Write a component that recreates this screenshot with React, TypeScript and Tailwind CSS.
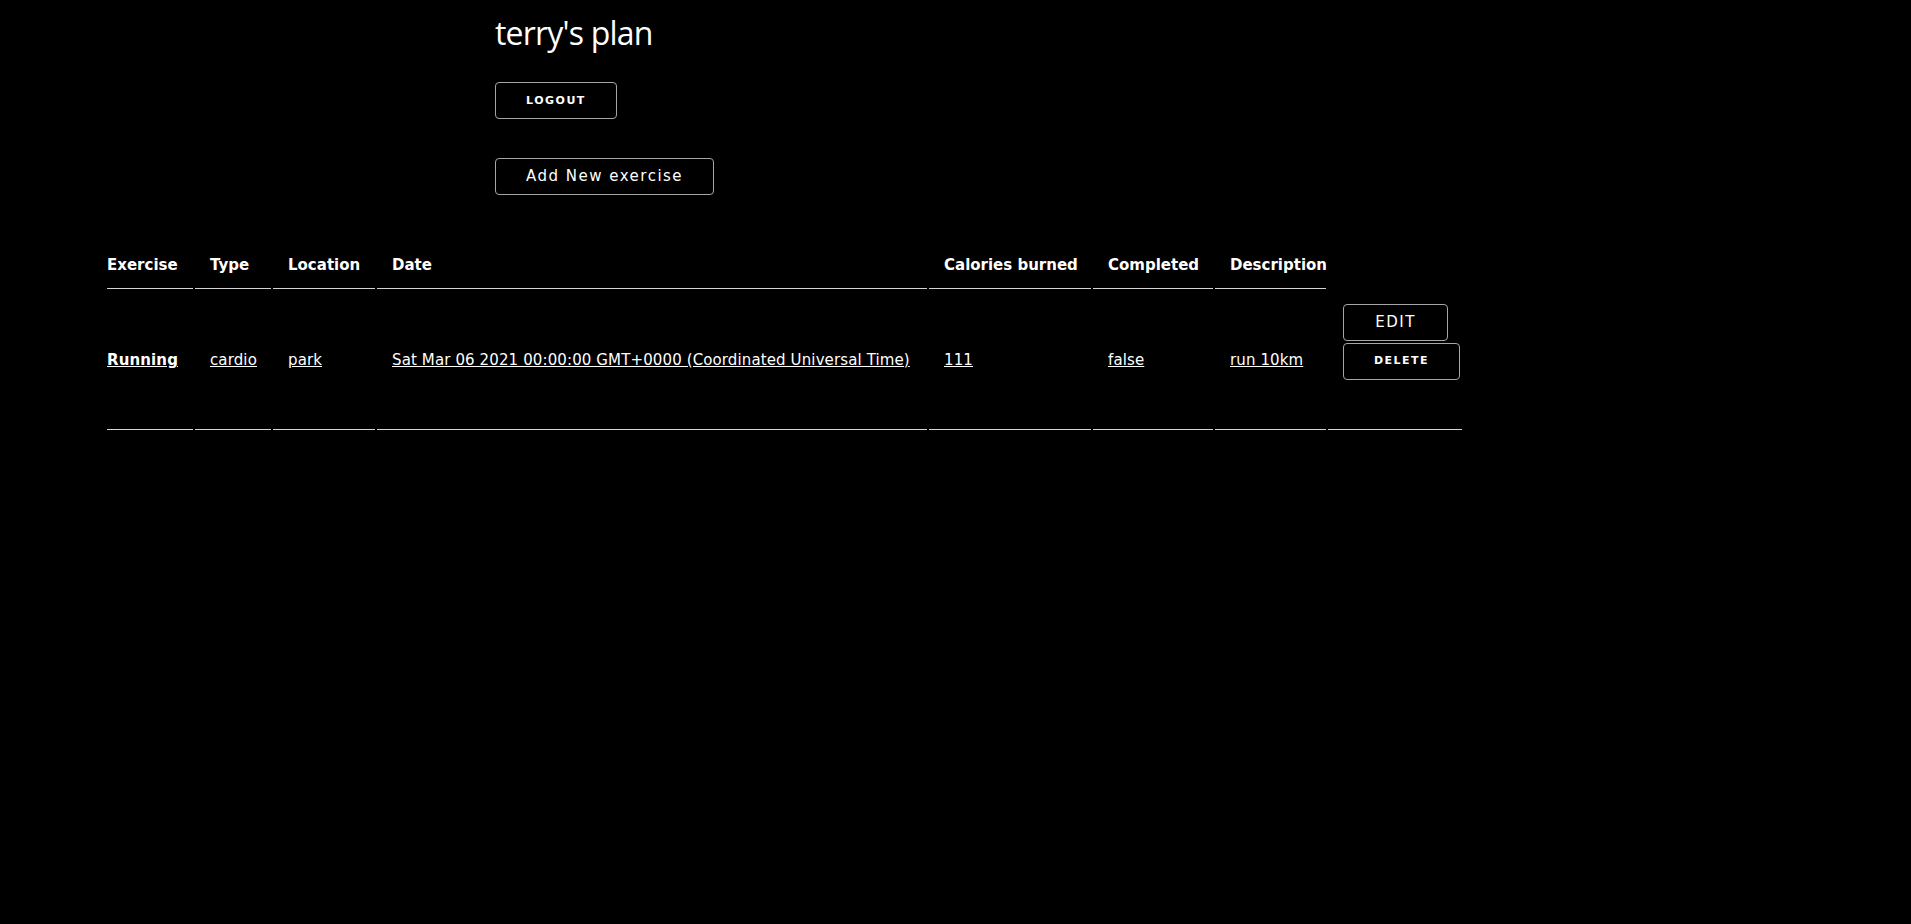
import React from 'react'

const rows = [
  {
    exercise: 'Running',
    type: 'cardio',
    location: 'park',
    date: 'Sat Mar 06 2021 00:00:00 GMT+0000 (Coordinated Universal Time)',
    calories: '111',
    completed: 'false',
    description: 'run 10km',
  },
]

export default function App() {
  const th = 'px-[15px] pt-[16px] pb-[14px] text-left font-bold leading-[18px] whitespace-nowrap border-b border-[#d4d4d4] align-middle'
  const td = 'px-[15px] py-[15px] leading-[18px] whitespace-nowrap tracking-[0.12px] border-b border-[#d4d4d4] align-middle'

  return (
    <div className="min-h-screen bg-black text-white text-[15px]" style={{ fontFamily: '"DejaVu Sans", Verdana, sans-serif' }}>
      <div className="pl-[495px] pt-[14px]">
        <h1 className="text-[32px] leading-[38px] tracking-[-0.8px] text-white" style={{ fontFamily: '"Open Sans", "Noto Sans", sans-serif' }}>
          terry's plan
        </h1>
        <button className="mt-[30px] w-[122px] h-[37px] pt-[2px] border border-[#a6a6a6] rounded-[4px] text-[11px] font-bold tracking-[1.5px] text-white">
          LOGOUT
        </button>
        <div>
          <button className="mt-[39px] w-[219px] h-[37px] border border-[#a6a6a6] rounded-[4px] text-[15px] tracking-[1.5px] text-white">
            Add New exercise
          </button>
        </div>
      </div>

      <table className="mt-[43px] ml-[105px] table-fixed border-separate border-spacing-[2px] w-[1359px]">
        <thead>
          <tr>
            <th className={th + ' w-[86px] !pl-0'}>Exercise</th>
            <th className={th + ' w-[76px]'}>Type</th>
            <th className={th + ' w-[102px]'}>Location</th>
            <th className={th + ' w-[550px]'}>Date</th>
            <th className={th + ' w-[162px]'}>Calories burned</th>
            <th className={th + ' w-[120px]'}>Completed</th>
            <th className={th + ' w-[111px] !pr-0'}>Description</th>
            <th className="w-[134px]"></th>
          </tr>
        </thead>
        <tbody>
          {rows.map((r, i) => (
            <tr key={i}>
              <td className={td + ' !pl-0 font-bold'}><a href="#" className="underline">{r.exercise}</a></td>
              <td className={td}><a href="#" className="underline">{r.type}</a></td>
              <td className={td}><a href="#" className="underline">{r.location}</a></td>
              <td className={td}><a href="#" className="underline">{r.date}</a></td>
              <td className={td}><a href="#" className="underline">{r.calories}</a></td>
              <td className={td}><a href="#" className="underline">{r.completed}</a></td>
              <td className={td + ' !pr-0'}><a href="#" className="underline">{r.description}</a></td>
              <td className="pl-[15px] pr-0 pt-[13px] pb-[49px] align-top border-b border-[#d4d4d4]">
                <div className="flex flex-col items-start gap-[2px]">
                  <button className="w-[105px] h-[37px] border border-[#a6a6a6] rounded-[4px] text-[15px] tracking-[1.5px] text-white">
                    EDIT
                  </button>
                  <button className="w-[117px] h-[37px] border border-[#a6a6a6] rounded-[4px] text-[11px] font-bold tracking-[1.5px] text-white">
                    DELETE
                  </button>
                </div>
              </td>
            </tr>
          ))}
        </tbody>
      </table>
    </div>
  )
}
